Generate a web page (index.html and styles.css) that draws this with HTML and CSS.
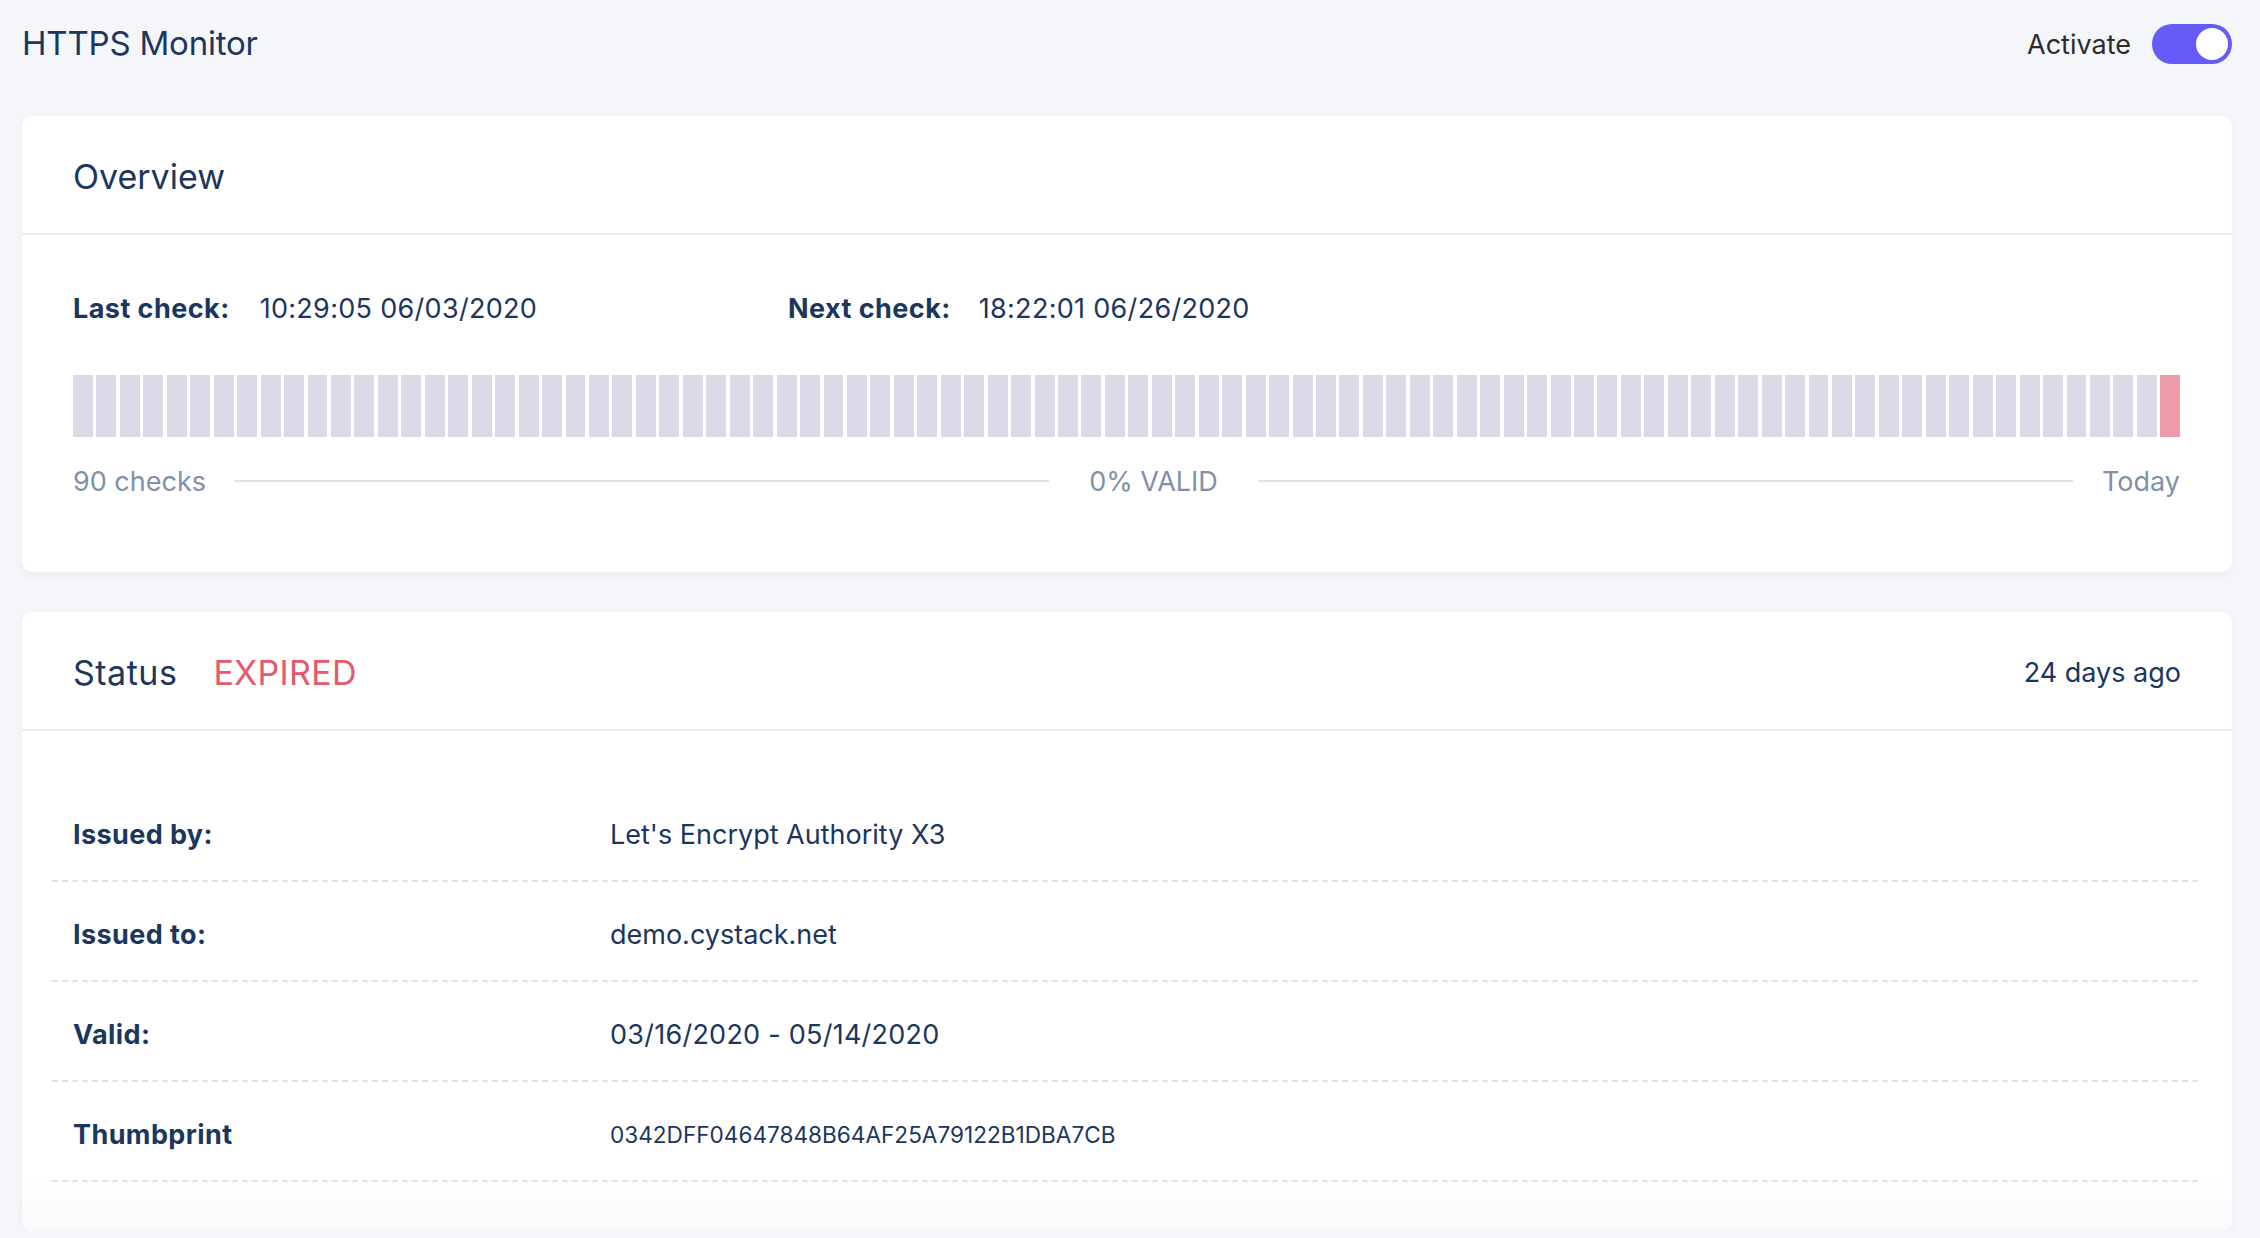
FILE: index.html
```html
<!DOCTYPE html>
<html lang="en">
<head>
<meta charset="utf-8">
<title>HTTPS Monitor</title>
<link rel="stylesheet" href="styles.css">
</head>
<body>
<div class="page">
  <header class="topbar">
    <h1 class="page-title">HTTPS Monitor</h1>
    <div class="activate">
      <span class="activate-label">Activate</span>
      <span class="toggle"><span class="toggle-knob"></span></span>
    </div>
  </header>

  <section class="card">
    <div class="card-header">
      <h2 class="card-title">Overview</h2>
    </div>
    <div class="card-body overview-body">
      <div class="checks-row">
        <div class="check-item"><span class="check-label">Last check:</span><span class="check-value">10:29:05 06/03/2020</span></div>
        <div class="check-item"><span class="check-label">Next check:</span><span class="check-value">18:22:01 06/26/2020</span></div>
      </div>
      <div class="bars">
        <span class="bar"></span><span class="bar"></span><span class="bar"></span><span class="bar"></span><span class="bar"></span><span class="bar"></span><span class="bar"></span><span class="bar"></span><span class="bar"></span><span class="bar"></span>
        <span class="bar"></span><span class="bar"></span><span class="bar"></span><span class="bar"></span><span class="bar"></span><span class="bar"></span><span class="bar"></span><span class="bar"></span><span class="bar"></span><span class="bar"></span>
        <span class="bar"></span><span class="bar"></span><span class="bar"></span><span class="bar"></span><span class="bar"></span><span class="bar"></span><span class="bar"></span><span class="bar"></span><span class="bar"></span><span class="bar"></span>
        <span class="bar"></span><span class="bar"></span><span class="bar"></span><span class="bar"></span><span class="bar"></span><span class="bar"></span><span class="bar"></span><span class="bar"></span><span class="bar"></span><span class="bar"></span>
        <span class="bar"></span><span class="bar"></span><span class="bar"></span><span class="bar"></span><span class="bar"></span><span class="bar"></span><span class="bar"></span><span class="bar"></span><span class="bar"></span><span class="bar"></span>
        <span class="bar"></span><span class="bar"></span><span class="bar"></span><span class="bar"></span><span class="bar"></span><span class="bar"></span><span class="bar"></span><span class="bar"></span><span class="bar"></span><span class="bar"></span>
        <span class="bar"></span><span class="bar"></span><span class="bar"></span><span class="bar"></span><span class="bar"></span><span class="bar"></span><span class="bar"></span><span class="bar"></span><span class="bar"></span><span class="bar"></span>
        <span class="bar"></span><span class="bar"></span><span class="bar"></span><span class="bar"></span><span class="bar"></span><span class="bar"></span><span class="bar"></span><span class="bar"></span><span class="bar"></span><span class="bar"></span>
        <span class="bar"></span><span class="bar"></span><span class="bar"></span><span class="bar"></span><span class="bar"></span><span class="bar"></span><span class="bar"></span><span class="bar"></span><span class="bar"></span><span class="bar bar-fail"></span>
      </div>
      <div class="bars-legend">
        <span class="legend-text">90 checks</span>
        <span class="legend-line legend-line-left"></span>
        <span class="legend-text">0% VALID</span>
        <span class="legend-line legend-line-right"></span>
        <span class="legend-text">Today</span>
      </div>
    </div>
  </section>

  <section class="card card-status">
    <div class="card-header status-header">
      <div class="status-title">
        <h2 class="card-title">Status</h2>
        <span class="status-badge">EXPIRED</span>
      </div>
      <span class="status-age">24 days ago</span>
    </div>
    <div class="card-body status-body">
      <div class="info-row"><span class="info-label">Issued by:</span><span class="info-value">Let's Encrypt Authority X3</span></div>
      <div class="info-row"><span class="info-label">Issued to:</span><span class="info-value">demo.cystack.net</span></div>
      <div class="info-row"><span class="info-label">Valid:</span><span class="info-value num">03/16/2020 - 05/14/2020</span></div>
      <div class="info-row"><span class="info-label">Thumbprint</span><span class="info-value info-value-small">0342DFF04647848B64AF25A79122B1DBA7CB</span></div>
    </div>
  </section>
</div>
</body>
</html>
```

FILE: styles.css
```css
* {
  box-sizing: border-box;
}

html, body {
  margin: 0;
  padding: 0;
  background: #f5f6fa;
  overflow: hidden;
}

body {
  font-family: "Inter", "Noto Sans", "Liberation Sans", sans-serif;
  color: #1c365d;
}

.page {
  padding: 0 28px 0 22px;
}

.topbar {
  height: 86px;
  display: flex;
  align-items: center;
  justify-content: space-between;
}

.page-title {
  margin: 0;
  font-size: 33px;
  font-weight: 400;
  line-height: 40px;
  letter-spacing: -0.2px;
  color: #1c365d;
}

.activate {
  display: flex;
  align-items: center;
  gap: 21px;
  padding-top: 2px;
}

.activate-label {
  font-size: 27px;
  line-height: 36px;
  padding-top: 2px;
  color: #2b2b2e;
}

.toggle {
  width: 80px;
  height: 40px;
  border-radius: 20px;
  background: #655bf6;
  display: flex;
  align-items: center;
  justify-content: flex-end;
  padding: 0 4px;
}

.toggle-knob {
  width: 32px;
  height: 32px;
  border-radius: 50%;
  background: #ffffff;
}

.card {
  margin-top: 30px;
  background: #ffffff;
  border-radius: 10px;
  box-shadow: 0 3px 8px rgba(40, 50, 100, 0.05);
}

.card-header {
  height: 119px;
  border-bottom: 2px solid #ececf2;
  display: flex;
  align-items: center;
  padding: 4px 51px 0;
}

.card-title {
  margin: 0;
  font-size: 34px;
  font-weight: 400;
  line-height: 40px;
  letter-spacing: 0;
  color: #1c365d;
}

.overview-body {
  padding: 56px 52px 73px 51px;
}

.checks-row {
  display: flex;
  height: 36px;
  align-items: center;
}

.check-item {
  display: flex;
  align-items: center;
  font-size: 27px;
  line-height: 36px;
}

.check-item:first-child {
  width: 715px;
}

.check-label {
  font-weight: 700;
  letter-spacing: 0.45px;
  margin-right: 30px;
}

.check-value {
  letter-spacing: 0.3px;
}

.check-item:last-child .check-label {
  margin-right: 28px;
}

.bars {
  margin-top: 48px;
  height: 62px;
  display: flex;
  gap: 3.5px;
}

.bar {
  flex: 1;
  background: #dad9e8;
}

.bar-fail {
  background: #ee9da8;
}

.bars-legend {
  margin-top: 26px;
  display: flex;
  align-items: center;
  height: 36px;
}

.legend-text {
  font-size: 27px;
  line-height: 36px;
  color: #8090aa;
  white-space: nowrap;
  padding-top: 2px;
}

.legend-line {
  flex: 1;
  height: 2px;
  background: #e2e2e8;
}

.legend-line-left {
  margin: 0 40px 0 28px;
}

.legend-line-right {
  margin: 0 29px 0 40px;
}

.card-status {
  margin-top: 40px;
}

.status-header {
  justify-content: space-between;
}

.status-title {
  display: flex;
  align-items: center;
  gap: 36px;
}

.status-title .card-title {
  letter-spacing: 0.5px;
}

.status-badge {
  font-size: 34px;
  line-height: 40px;
  color: #e45a6d;
  letter-spacing: 0.3px;
}

.status-age {
  font-size: 27px;
  line-height: 36px;
  color: #1c365d;
}

.status-body {
  padding: 51px 30px 49px;
  border-radius: 0 0 10px 10px;
  background: linear-gradient(to bottom, #ffffff 88%, #fafafb 100%);
}

.info-row {
  height: 100px;
  display: grid;
  grid-template-columns: 537px 1fr;
  align-items: center;
  padding: 5px 0 0 21px;
  background-image: linear-gradient(to right, #e2e3ea 60%, rgba(255, 255, 255, 0) 60%);
  background-size: 10px 2px;
  background-position: left bottom;
  background-repeat: repeat-x;
}

.info-label {
  font-size: 27px;
  line-height: 36px;
  font-weight: 700;
  letter-spacing: 0.4px;
}

.info-value {
  font-size: 27px;
  line-height: 36px;
}

.num {
  letter-spacing: 0.25px;
}

.info-value-small {
  font-size: 22.6px;
}
```
